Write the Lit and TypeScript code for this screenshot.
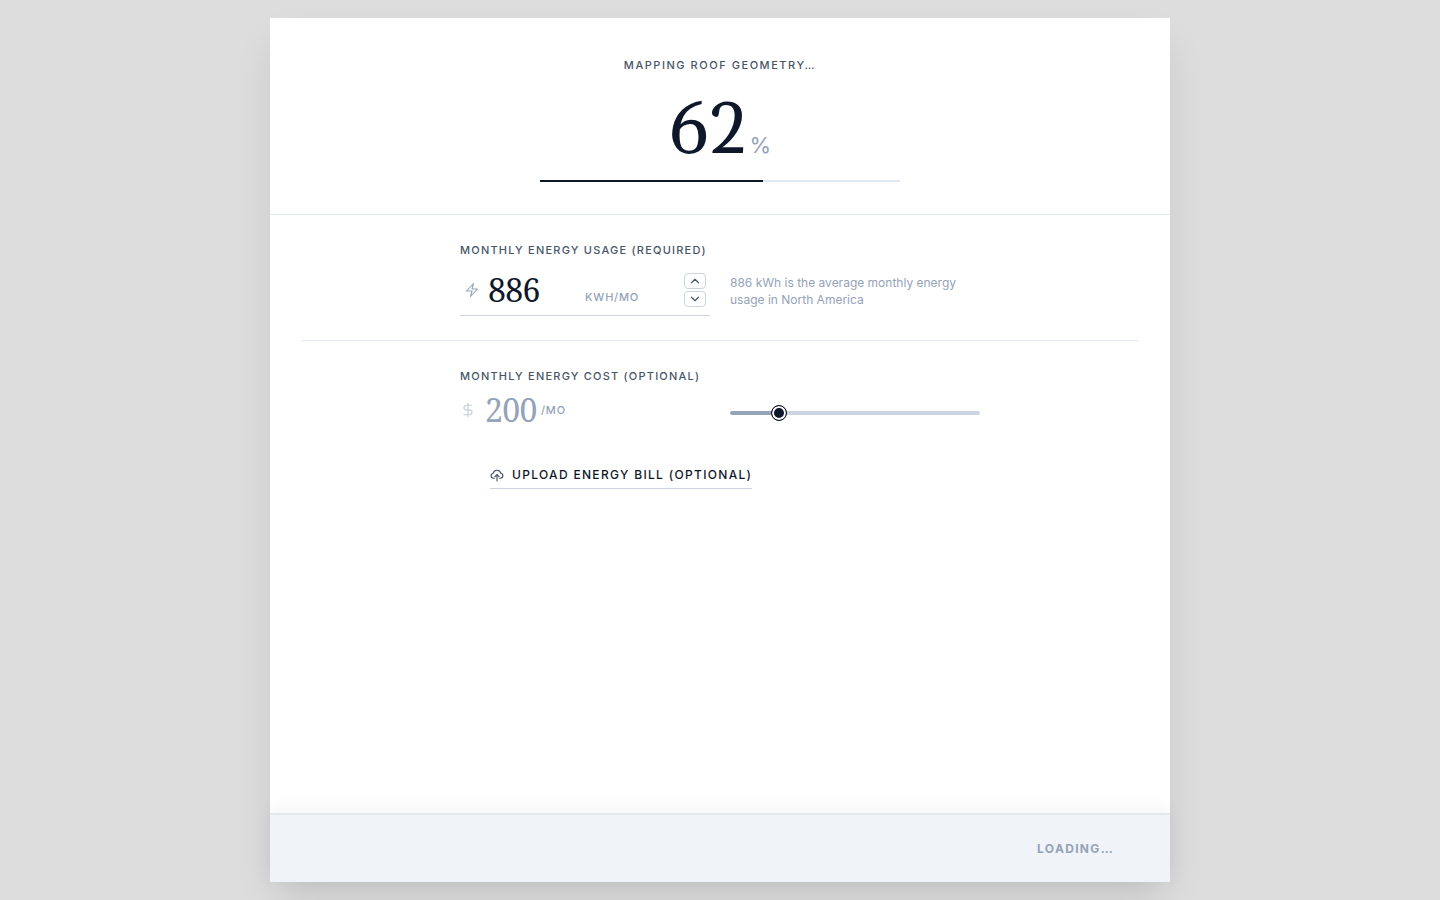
import { LitElement, html, css } from "lit";
import { customElement, state } from "lit/decorators.js";

@customElement("app-root")
export class AppRoot extends LitElement {
  @state() private progress = 62;
  @state() private usage = 886;
  @state() private cost = 200;

  private readonly minCost = 30;
  private readonly maxCost = 1000;

  static styles = css`
    :host {
      --ink: #0f172a;
      --label: #475569;
      --muted: #94a3b8;
      --line: #e2e8f0;
      --line-strong: #cbd5e1;
      --display: Gelasio, "Noto Serif", serif;
      --serif: "Noto Serif", serif;
      --sans: Inter, "Liberation Sans", sans-serif;
      display: flex;
      justify-content: center;
      box-sizing: border-box;
      min-height: 100vh;
      padding: 18px;
      background: #dddddd;
      font-family: var(--sans);
      color: var(--ink);
    }
    * {
      box-sizing: border-box;
    }
    button,
    input {
      font: inherit;
      color: inherit;
      margin: 0;
      padding: 0;
      border: 0;
      background: none;
    }
    .card {
      display: flex;
      flex-direction: column;
      width: 100%;
      max-width: 900px;
      background: #ffffff;
      box-shadow: 0 20px 40px -8px rgba(0, 0, 0, 0.13);
    }
    .status {
      display: flex;
      flex-direction: column;
      align-items: center;
      padding: 40px 32px 32px;
      border-bottom: 1px solid var(--line);
    }
    .stage {
      margin: 0;
      font-size: 11px;
      line-height: 14px;
      font-weight: 500;
      letter-spacing: 0.14em;
      text-transform: uppercase;
      color: var(--label);
    }
    .percent {
      display: flex;
      align-items: baseline;
      gap: 4px;
      height: 72px;
      margin-top: 24px;
      font-family: var(--display);
      font-variant-numeric: lining-nums;
      font-size: 72px;
      line-height: 72px;
      letter-spacing: -0.03em;
    }
    .sign {
      font-family: var(--sans);
      font-size: 22px;
      line-height: 22px;
      letter-spacing: 0;
      color: var(--muted);
    }
    .bar {
      width: 100%;
      max-width: 360px;
      height: 2px;
      margin-top: 12px;
      background: var(--line);
    }
    .fill {
      height: 100%;
      background: var(--ink);
    }
    .form {
      flex: 1;
      padding: 0 32px;
    }
    .group {
      display: flex;
      justify-content: center;
      padding: 28px 0 24px;
    }
    .group + .group {
      border-top: 1px solid var(--line);
    }
    .grid {
      display: grid;
      grid-template-columns: 1fr 1fr;
      column-gap: 20px;
      width: 100%;
      max-width: 520px;
    }
    .label {
      grid-column: 1 / -1;
      font-size: 11px;
      line-height: 14px;
      font-weight: 500;
      letter-spacing: 0.11em;
      text-transform: uppercase;
      color: var(--label);
    }
    .field {
      display: flex;
      align-items: center;
      height: 59px;
      padding: 8px 4px 0;
      border-bottom: 1px solid var(--line-strong);
    }
    .icon {
      flex: none;
      fill: none;
      stroke: currentColor;
      stroke-width: 2;
      stroke-linecap: round;
      stroke-linejoin: round;
    }
    .bolt {
      color: var(--muted);
      stroke-width: 1.6;
    }
    .dollar {
      color: var(--line-strong);
    }
    .number {
      min-width: 0;
      outline: none;
      font-family: var(--serif);
      font-size: 32px;
      line-height: 40px;
      height: 40px;
      letter-spacing: -0.02em;
    }
    .usage {
      width: 97px;
      margin-left: 8px;
    }
    .unit {
      font-size: 11px;
      line-height: 14px;
      font-weight: 500;
      letter-spacing: 0.07em;
      text-transform: uppercase;
      color: var(--muted);
    }
    .low {
      padding-top: 14px;
    }
    .steps {
      display: flex;
      flex-direction: column;
      gap: 2px;
      margin-left: auto;
    }
    .step {
      display: flex;
      align-items: center;
      justify-content: center;
      width: 22px;
      height: 16px;
      border: 1px solid var(--line-strong);
      border-radius: 4px;
      color: var(--label);
      cursor: pointer;
    }
    .hint {
      align-self: center;
      margin: 8px 0 0;
      font-size: 12px;
      line-height: 17px;
      color: var(--muted);
    }
    .money {
      display: flex;
      align-items: center;
      height: 54px;
    }
    .cost {
      width: 52px;
      margin: 0 4px 0 9px;
      color: var(--muted);
    }
    .slider {
      align-self: center;
      width: 100%;
      height: 16px;
      margin-top: 6px;
      appearance: none;
      cursor: pointer;
    }
    .slider::-webkit-slider-runnable-track {
      height: 4px;
      border-radius: 2px;
      background: linear-gradient(
        to right,
        var(--muted) var(--filled),
        var(--line-strong) var(--filled)
      );
    }
    .slider::-webkit-slider-thumb {
      appearance: none;
      width: 16px;
      height: 16px;
      margin-top: -6px;
      border: 1px solid var(--ink);
      border-radius: 50%;
      background: var(--ink);
      box-shadow: inset 0 0 0 2px #ffffff;
    }
    .attach {
      grid-column: 1 / -1;
      padding: 29px 30px 0;
    }
    .upload {
      display: inline-flex;
      align-items: center;
      gap: 8px;
      padding-bottom: 5px;
      border-bottom: 1px solid var(--line-strong);
      font-size: 12px;
      line-height: 16px;
      font-weight: 500;
      letter-spacing: 0.11em;
      text-transform: uppercase;
      cursor: pointer;
    }
    .cloud {
      color: var(--label);
    }
    .footer {
      display: flex;
      align-items: center;
      justify-content: flex-end;
      padding: 26px 56px;
      border-top: 2px solid var(--line);
      background: #f0f3f8;
      box-shadow: 0 -4px 20px rgba(0, 0, 0, 0.05);
    }
    .next {
      font-size: 12px;
      line-height: 15px;
      font-weight: 700;
      letter-spacing: 0.11em;
      text-transform: uppercase;
      color: var(--muted);
    }
  `;

  private step(amount: number) {
    this.usage = Math.max(0, this.usage + amount);
  }

  render() {
    const filled =
      ((this.cost - this.minCost) / (this.maxCost - this.minCost)) * 100;
    return html`
      <main class="card">
        <header class="status">
          <p class="stage">Mapping roof geometry…</p>
          <div class="percent">
            <span>${this.progress}</span><span class="sign">%</span>
          </div>
          <div
            class="bar"
            role="progressbar"
            aria-label="Progress"
            aria-valuenow=${this.progress}
          >
            <div class="fill" style="width: ${this.progress}%"></div>
          </div>
        </header>

        <div class="form">
          <section class="group">
            <div class="grid">
              <label class="label" for="usage"
                >Monthly energy usage (required)</label
              >
              <div class="field">
                <svg
                  class="icon bolt"
                  width="16"
                  height="16"
                  viewBox="0 0 24 24"
                >
                  <path
                    d="m3.750 13.500 10.500-11.250L12 10.500h8.250L9.750 21.750 12 13.500H3.750Z"
                  />
                </svg>
                <input
                  class="number usage"
                  id="usage"
                  type="text"
                  inputmode="numeric"
                  .value=${String(this.usage)}
                  @change=${(e: Event) =>
                    (this.usage =
                      Number((e.target as HTMLInputElement).value) || 0)}
                />
                <span class="unit low">kWh/mo</span>
                <div class="steps">
                  <button
                    class="step"
                    type="button"
                    aria-label="Increase usage"
                    @click=${() => this.step(1)}
                  >
                    <svg class="icon" width="14" height="14" viewBox="0 0 24 24">
                      <path d="m18 15-6-6-6 6" />
                    </svg>
                  </button>
                  <button
                    class="step"
                    type="button"
                    aria-label="Decrease usage"
                    @click=${() => this.step(-1)}
                  >
                    <svg class="icon" width="14" height="14" viewBox="0 0 24 24">
                      <path d="m6 9 6 6 6-6" />
                    </svg>
                  </button>
                </div>
              </div>
              <p class="hint">
                886 kWh is the average monthly energy usage in North America
              </p>
            </div>
          </section>

          <section class="group">
            <div class="grid">
              <label class="label" for="cost"
                >Monthly energy cost (optional)</label
              >
              <div class="money">
                <svg
                  class="icon dollar"
                  width="16"
                  height="16"
                  viewBox="0 0 24 24"
                >
                  <path d="M12 2v20" />
                  <path
                    d="M17 5H9.500a3.500 3.500 0 0 0 0 7h5a3.500 3.500 0 0 1 0 7H6"
                  />
                </svg>
                <input
                  class="number cost"
                  id="cost"
                  type="text"
                  inputmode="numeric"
                  .value=${String(this.cost)}
                  @change=${(e: Event) =>
                    (this.cost =
                      Number((e.target as HTMLInputElement).value) || 0)}
                />
                <span class="unit">/mo</span>
              </div>
              <input
                class="slider"
                type="range"
                aria-label="Monthly energy cost"
                min=${this.minCost}
                max=${this.maxCost}
                .value=${String(this.cost)}
                style="--filled: ${filled}%"
                @input=${(e: Event) =>
                  (this.cost = Number((e.target as HTMLInputElement).value))}
              />
              <div class="attach">
                <button class="upload" type="button">
                  <svg
                    class="icon cloud"
                    width="14"
                    height="14"
                    viewBox="0 0 24 24"
                  >
                    <path
                      d="M7.500 17.500H6a4.300 4.300 0 0 1-.6-8.500 6.800 6.800 0 0 1 13.200 0 4.300 4.300 0 0 1-.6 8.500h-1.500"
                    />
                    <path d="M12 22V12" />
                    <path d="m8.500 15 3.500-3.500 3.500 3.500" />
                  </svg>
                  <span>Upload energy bill (optional)</span>
                </button>
              </div>
            </div>
          </section>
        </div>

        <footer class="footer">
          <button class="next" type="button" disabled>Loading…</button>
        </footer>
      </main>
    `;
  }
}
